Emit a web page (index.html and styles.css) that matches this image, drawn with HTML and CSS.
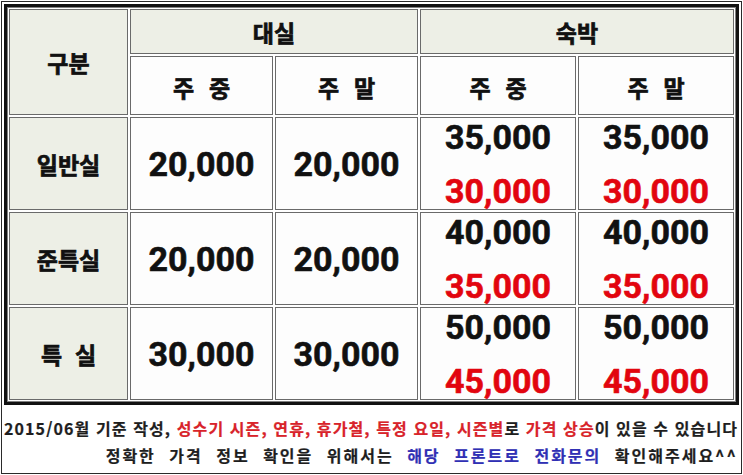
FILE: index.html
```html
<!DOCTYPE html>
<html lang="ko">
<head>
<meta charset="utf-8">
<link rel="stylesheet" href="styles.css">
</head>
<body>
<div class="frame">
  <table class="price">
    <colgroup>
      <col class="c-label"><col class="c-day"><col class="c-day"><col class="c-stay"><col class="c-stay">
    </colgroup>
    <tr class="r-h1">
      <td class="hd" rowspan="2">구분</td>
      <td class="hd" colspan="2">대실</td>
      <td class="hd" colspan="2">숙박</td>
    </tr>
    <tr class="r-h2">
      <td class="sub">주&nbsp;&nbsp;중</td>
      <td class="sub">주&nbsp;&nbsp;말</td>
      <td class="sub">주&nbsp;&nbsp;중</td>
      <td class="sub">주&nbsp;&nbsp;말</td>
    </tr>
    <tr class="r-body">
      <td class="hd label">일반실</td>
      <td class="num">20,000</td>
      <td class="num">20,000</td>
      <td class="num"><div class="pair"><span>35,000</span><span class="red">30,000</span></div></td>
      <td class="num"><div class="pair"><span>35,000</span><span class="red">30,000</span></div></td>
    </tr>
    <tr class="r-body">
      <td class="hd label">준특실</td>
      <td class="num">20,000</td>
      <td class="num">20,000</td>
      <td class="num"><div class="pair"><span>40,000</span><span class="red">35,000</span></div></td>
      <td class="num"><div class="pair"><span>40,000</span><span class="red">35,000</span></div></td>
    </tr>
    <tr class="r-body">
      <td class="hd label">특&nbsp;&nbsp;실</td>
      <td class="num">30,000</td>
      <td class="num">30,000</td>
      <td class="num"><div class="pair"><span>50,000</span><span class="red">45,000</span></div></td>
      <td class="num"><div class="pair"><span>50,000</span><span class="red">45,000</span></div></td>
    </tr>
  </table>
  <div class="notes">
    <p class="note note-1">2015/06월 기준 작성, <span class="n-red">성수기 시즌, 연휴, 휴가철, 특정 요일, 시즌별</span>로 <span class="n-red">가격 상승</span>이 있을 수 있습니다</p>
    <p class="note note-2">정확한 가격 정보 확인을 위해서는 <span class="n-blue">해당 프론트로 전화문의</span> 확인해주세요^^</p>
  </div>
</div>
</body>
</html>
```

FILE: styles.css
```css
* { box-sizing: border-box; }
html, body { margin: 0; padding: 0; background: #ffffff; }
body { width: 743px; height: 475px; overflow: hidden; }

.frame {
  margin: 1px;
  width: 741px;
  height: 473px;
  border: 1px solid #2a2a2a;
  padding: 2px 0 0 2px;
  font-family: "Noto Sans CJK KR", "Noto Sans", sans-serif;
}

.price {
  border-collapse: separate;
  border-spacing: 2px;
  border: 3px solid #111;
  box-shadow: inset 0 0 0 1px #808080;
  table-layout: fixed;
  width: 735px;
  background: #ffffff;
}

.c-label { width: 119px; }
.c-day { width: 143px; }
.c-stay { width: 156px; }

.price td {
  border: 1px solid #6a6a6a;
  padding: 0;
  text-align: center;
  vertical-align: middle;
  color: #111;
}

.r-h1 { height: 45px; }
.r-h2 { height: 59px; }
.r-body { height: 93px; }

.hd {
  background: #edefe6;
  font-weight: 700;
  font-size: 23px;
  -webkit-text-stroke: 0.7px #111;
}
.sub {
  background: #fdfdfd;
  font-weight: 700;
  font-size: 23px;
  word-spacing: 1px;
  -webkit-text-stroke: 0.7px #111;
  padding-top: 3px !important;
}

.num {
  background: #fdfdfd;
  font-family: Roboto, "Liberation Sans", sans-serif;
  font-weight: 700;
  font-size: 34px;
  line-height: 34px;
  color: #0a0a0a;
  -webkit-text-stroke: 0.6px currentColor;
}

.pair {
  display: flex;
  flex-direction: column;
  align-items: center;
  gap: 20px;
}
.red { color: #e2050f; }

.notes {
  padding: 10px 3px 0 0;
  text-align: right;
}
.note {
  margin: 0;
  font-size: 16px;
  line-height: 27px;
  font-weight: 700;
  color: #1e1e1e;
  white-space: nowrap;
  -webkit-text-stroke: 0.2px currentColor;
}
.note-1 { letter-spacing: 1.1px; }
.note-2 { letter-spacing: 2px; word-spacing: 7px; }
.n-red { color: #d8232a; }
.n-blue { color: #3030b4; }
```
